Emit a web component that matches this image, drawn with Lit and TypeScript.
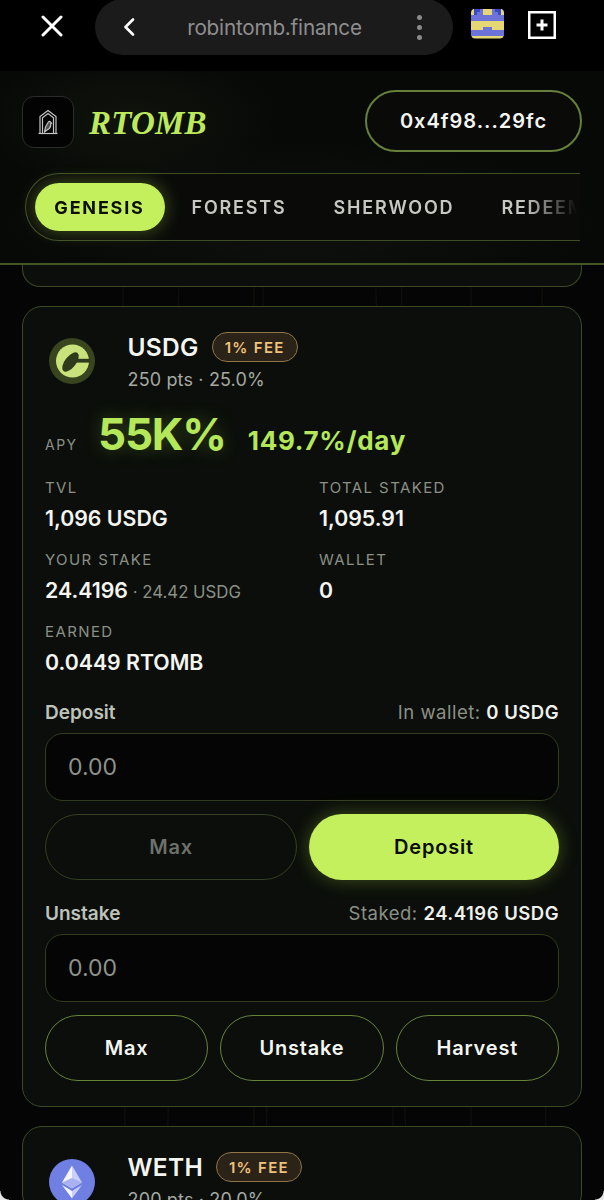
import { LitElement, html, css, svg } from "lit"
import { customElement } from "lit/decorators.js"

interface Stat {
  label: string
  value: string
  note?: string
}

const STATS: Stat[] = [
  { label: "TVL", value: "1,096 USDG" },
  { label: "TOTAL STAKED", value: "1,095.91" },
  { label: "YOUR STAKE", value: "24.4196", note: "24.42 USDG" },
  { label: "WALLET", value: "0" },
  { label: "EARNED", value: "0.0449 RTOMB" },
]

// pixel-art favicon of the open tab, 11x10 cells (d dark blue, b blue, y yellow)
const FAVICON = [
  "yddbyyybddy",
  "ydbbyyybbdy",
  "bbbbbbbbbbb",
  "bbbbbbbbbbb",
  "yyyyyyyyyyy",
  "yyyyyyyyyyy",
  "yyyybbbyyyy",
  "bbbbbbbbbbb",
  "bbbbbbbbbbb",
  "yyyyyyyyyyy",
]

const CELL: Record<string, string> = { d: "#3a49c8", b: "#6d72d8" }

function favicon() {
  return html`<svg class="favicon" width="33" height="31" viewBox="0 0 11 10" shape-rendering="crispEdges">
    <defs><clipPath id="fav"><rect width="11" height="10" rx="1.400" /></clipPath></defs>
    <g clip-path="url(#fav)">
      <rect width="11" height="10" fill="#e6d776" />
      ${FAVICON.flatMap((row, y) =>
        [...row].map((c, x) =>
          CELL[c] ? svg`<rect x=${x} y=${y} width="1.02" height="1.02" fill=${CELL[c]} />` : null,
        ),
      )}
    </g>
  </svg>`
}

const birdLogo = html`<svg width="22" height="26" viewBox="0 0 22 26" fill="none" stroke="#c4c4c4" stroke-width="1.2">
  <path d="M3 24V7.500L11 1.500l8 6V24" />
  <path d="M5.500 24V8.800L11 4.500l5.500 4.300V24" />
  <path d="M1.500 24.500h19" />
  <path d="M7.500 23c.3-3.500 1.500-7 3.500-9.500.5-1.500 2.300-1.500 2.800 0l.8.8-.8.4c.2 3-1.300 5-3.400 6z" fill="#555" />
</svg>`

const usdgLogo = html`<svg class="coin" width="46" height="46" viewBox="0 0 46 46">
  <circle cx="23" cy="23" r="23" fill="#38451f" />
  <circle cx="23.500" cy="23" r="16.500" fill="#c9e27c" />
  <ellipse cx="21.500" cy="24" rx="11.500" ry="5.500" transform="rotate(-52 21.500 24)" fill="#2f3b1a" />
  <rect x="22" y="20.800" width="19" height="3.800" fill="#2f3b1a" />
</svg>`

const ethLogo = html`<svg class="coin eth" width="46" height="46" viewBox="0 0 46 46">
  <circle cx="23" cy="23" r="23" fill="#6f80e2" />
  <path d="M23 6.500 13 23.500l10 5.800z" fill="#f4f5fd" />
  <path d="M23 6.500 33 23.500l-10 5.800z" fill="#c9cff5" />
  <path d="M13 23.500l10-4.500 10 4.500-10 5.800z" fill="#a9b2ee" />
  <path d="M13 26l10 13.500V32z" fill="#f4f5fd" />
  <path d="M33 26 23 39.500V32z" fill="#c9cff5" />
</svg>`

@customElement("app-root")
export class AppRoot extends LitElement {
  static styles = css`
    :host {
      display: block;
      width: 604px;
      height: 1200px;
      overflow: hidden;
      background: #040504;
      color: #f4f5f0;
      font-family: Inter, "Liberation Sans", sans-serif;
      position: relative;
    }
    .browser {
      height: 71px;
      background: #000;
      display: flex;
      align-items: flex-start;
    }
    .close {
      margin: 15px 0 0 41px;
    }
    .urlbar {
      margin: -1px 0 0 32px;
      width: 358px;
      height: 56px;
      border-radius: 28px;
      background: #1b1b1b;
      display: flex;
      align-items: center;
      box-sizing: border-box;
      padding: 0 31px 0 28px;
    }
    .url {
      flex: 1;
      text-align: center;
      font-size: 20.7px;
      color: #8e8e8e;
      letter-spacing: -0.2px;
      padding-right: 3px;
    }
    .dots {
      display: flex;
      flex-direction: column;
      gap: 5px;
    }
    .dots i {
      width: 5px;
      height: 5px;
      border-radius: 50%;
      background: #8a8a8a;
    }
    .favicon {
      margin: 8px 0 0 18px;
    }
    .newtab {
      margin: 11px 0 0 24px;
    }

    header {
      height: 194px;
      box-sizing: border-box;
      border-bottom: 2px solid #445626;
      background:
        radial-gradient(ellipse 150px 70px at 130px 50px, #10140c, transparent),
        radial-gradient(ellipse 300px 80px at 300px 150px, #111210, transparent),
        #070907;
    }
    .top {
      display: flex;
      align-items: center;
      justify-content: space-between;
      padding: 19px 22px 0;
    }
    .brand {
      display: flex;
      align-items: center;
      gap: 15px;
    }
    .logo {
      width: 52px;
      height: 52px;
      box-sizing: border-box;
      border: 1.5px solid #2b2d2b;
      border-radius: 12px;
      background: #030303;
      display: flex;
      align-items: center;
      justify-content: center;
      margin-top: 2px;
    }
    .name {
      font-family: "Liberation Serif", serif;
      font-style: italic;
      font-weight: 700;
      font-size: 33px;
      letter-spacing: 0.2px;
      color: #bdea5c;
      margin-top: 4px;
    }
    .wallet {
      width: 217px;
      height: 62px;
      box-sizing: border-box;
      border: 2px solid #667f3b;
      border-radius: 31px;
      display: flex;
      align-items: center;
      justify-content: center;
      font-size: 20px;
      font-weight: 600;
      letter-spacing: 1px;
      color: #f4f5f0;
      background: #0a0b09;
    }
    nav {
      margin: 21px 24px 0 25px;
      height: 68px;
      box-sizing: border-box;
      border: 1.5px solid #3f4f25;
      border-right: none;
      border-radius: 34px 0 0 34px;
      overflow: hidden;
      display: flex;
      align-items: center;
      padding-left: 8.5px;
      background: #0a0b09;
    }
    .tabs {
      flex: 1;
      display: flex;
      align-items: center;
      gap: 47px;
      white-space: nowrap;
      overflow: hidden;
      height: 100%;
      font-size: 18px;
      font-weight: 600;
      letter-spacing: 1.8px;
      color: #c6c8c1;
      -webkit-mask-image: linear-gradient(to right, #000 90%, transparent 99.5%);
      mask-image: linear-gradient(to right, #000 90%, transparent 99.5%);
      padding: 0 0 0 2px;
      margin-left: -2px;
    }
    .tabs span.active {
      width: 130px;
      height: 48px;
      border-radius: 24px;
      background: #c4f05d;
      color: #0b0f06;
      font-weight: 700;
      display: flex;
      align-items: center;
      justify-content: center;
      margin-right: -20px;
      flex: none;
    }
    .glow {
      position: absolute;
      left: 35px;
      top: 183px;
      width: 130px;
      height: 48px;
      border-radius: 24px;
      box-shadow: 0 0 16px 2px rgba(170, 215, 70, 0.3);
      pointer-events: none;
    }

    main {
      position: relative;
      padding: 0 22px;
      display: flex;
      flex-direction: column;
      gap: 19px;
    }
    .rays {
      position: absolute;
      left: 0;
      top: 0;
      width: 604px;
      height: 935px;
    }
    .stub,
    .card {
      position: relative;
      box-sizing: border-box;
      border: 1.5px solid #3b4a24;
      background: #0b0e0a;
    }
    .stub {
      height: 22px;
      border-top: none;
      border-radius: 0 0 18px 18px;
    }
    .card {
      border-radius: 20px;
      padding: 0 22px;
    }
    .pool {
      height: 801px;
    }
    .head {
      display: flex;
      align-items: flex-start;
      padding-top: 25px;
    }
    .coin {
      margin: 6px 0 0 4px;
      flex: none;
    }
    .coin.eth {
      margin-top: 7px;
    }
    .titles {
      margin-left: 32.5px;
    }
    .titleline {
      display: flex;
      align-items: center;
      gap: 13px;
      height: 30px;
    }
    .title {
      font-size: 24.5px;
      font-weight: 600;
      letter-spacing: 0.3px;
    }
    .badge {
      width: 86px;
      height: 30px;
      box-sizing: border-box;
      border: 1.5px solid #8f7548;
      border-radius: 15px;
      background: #2b2318;
      color: #f0c27c;
      font-size: 15px;
      font-weight: 600;
      letter-spacing: 1.3px;
      display: flex;
      align-items: center;
      justify-content: center;
    }
    .sub {
      margin-top: 5px;
      font-size: 18px;
      color: #a5a9a1;
      line-height: 26px;
      letter-spacing: 0.15px;
    }
    .apy {
      display: flex;
      align-items: baseline;
      margin-top: 14px;
      height: 58px;
    }
    .apy .tag {
      width: 53px;
      font-size: 14px;
      letter-spacing: 1.5px;
      color: #8c9087;
    }
    .apy .big {
      font-size: 44px;
      font-weight: 700;
      letter-spacing: -1.2px;
      color: #b4e75a;
      text-shadow: 0 0 18px rgba(170, 225, 80, 0.3);
    }
    .apy .day {
      margin-left: 22px;
      font-size: 26px;
      font-weight: 700;
      color: #b4e75a;
      letter-spacing: 0.7px;
    }
    .stats {
      display: grid;
      grid-template-columns: 274px 1fr;
      row-gap: 18px;
      margin-top: 13px;
    }
    .stat .label {
      font-size: 15px;
      letter-spacing: 1.4px;
      color: #8c9087;
      line-height: 20px;
    }
    .stat .value {
      margin-top: 7px;
      height: 27px;
      font-size: 21.3px;
      font-weight: 600;
      line-height: 27px;
    }
    .stat .note {
      font-size: 16.8px;
      font-weight: 400;
      color: #8c9087;
    }
    .fieldhead {
      display: flex;
      justify-content: space-between;
      align-items: center;
      height: 24px;
    }
    .fieldhead b {
      font-size: 19px;
      font-weight: 600;
      color: #bfc2ba;
    }
    .fieldhead span {
      font-size: 18.5px;
      color: #8c9087;
      letter-spacing: 0.5px;
    }
    .fieldhead span b {
      font-size: 18.5px;
      font-weight: 600;
      color: #f0f1ec;
    }
    .input {
      margin-top: 9px;
      height: 68px;
      box-sizing: border-box;
      border: 1.5px solid #323d20;
      border-radius: 18px;
      background: #040504;
      display: flex;
      align-items: center;
      padding-left: 22px;
      font-size: 23px;
      color: #8f928b;
    }
    .buttons {
      display: flex;
      gap: 12px;
      margin-top: 13px;
    }
    .btn {
      flex: 1;
      height: 66px;
      box-sizing: border-box;
      border: 1.5px solid #67843a;
      border-radius: 33px;
      display: flex;
      align-items: center;
      justify-content: center;
      font-size: 20px;
      font-weight: 600;
      letter-spacing: 0.8px;
      color: #f4f5f0;
    }
    .btn.off {
      border-color: #333f20;
      color: #6e706b;
    }
    .btn.primary {
      border: none;
      background: #c4f05d;
      color: #0a0d05;
      box-shadow: 0 0 18px 1px rgba(170, 215, 70, 0.3);
    }
    .deposit {
      margin-top: 24px;
    }
    .unstake {
      margin-top: 21px;
    }
    .corner {
      position: absolute;
      bottom: 0;
      width: 9px;
      height: 9px;
    }
    .corner.left {
      left: 0;
      background: radial-gradient(circle at top right, transparent 8px, #e8e8e8 9px);
    }
    .corner.right {
      right: 0;
      background: radial-gradient(circle at top left, transparent 8px, #e8e8e8 9px);
    }
  `

  private stat(s: Stat) {
    return html`<div class="stat">
      <div class="label">${s.label}</div>
      <div class="value">${s.value}${s.note ? html`<span class="note"> · ${s.note}</span>` : ""}</div>
    </div>`
  }

  render() {
    return html`
      <div class="browser">
        <svg class="close" width="22" height="22" viewBox="0 0 22 22" stroke="#fff" stroke-width="3" stroke-linecap="round">
          <path d="M2 2l18 18M20 2 2 20" />
        </svg>
        <div class="urlbar">
          <svg width="12" height="18" viewBox="0 0 12 18" fill="none" stroke="#fff" stroke-width="2.6" stroke-linecap="round" stroke-linejoin="round">
            <path d="M10 1.500 2.500 9l7.500 7.500" />
          </svg>
          <span class="url">robintomb.finance</span>
          <div class="dots"><i></i><i></i><i></i></div>
        </div>
        ${favicon()}
        <svg class="newtab" width="28" height="28" viewBox="0 0 28 28" fill="none" stroke="#fff">
          <rect x="1.250" y="1.250" width="25.500" height="25.500" stroke-width="2.5" />
          <path d="M14 8.500v11M8.500 14h11" stroke-width="3" />
        </svg>
      </div>
      <header>
        <div class="top">
          <div class="brand">
            <div class="logo">${birdLogo}</div>
            <div class="name">RTOMB</div>
          </div>
          <div class="wallet">0x4f98...29fc</div>
        </div>
        <nav>
          <div class="tabs">
            <span class="active">GENESIS</span>
            <span>FORESTS</span>
            <span>SHERWOOD</span>
            <span>REDEEM</span>
          </div>
        </nav>
      </header>
      <div class="glow"></div>
      <main>
        <svg class="rays" viewBox="0 0 604 935" fill="none" stroke="#0d0f0a" stroke-width="1.5">
          <path d="M123 0l2 935M179 0l-12 935M263 0l4 935M375 0l33 935M402 0l-10 935M542 0l4 935M471 0v935M254 0v935" />
        </svg>
        <div class="stub"></div>
        <section class="card pool">
          <div class="head">
            ${usdgLogo}
            <div class="titles">
              <div class="titleline"><span class="title">USDG</span><span class="badge">1% FEE</span></div>
              <div class="sub">250 pts · 25.0%</div>
            </div>
          </div>
          <div class="apy">
            <span class="tag">APY</span>
            <span class="big">55K%</span>
            <span class="day">149.7%/day</span>
          </div>
          <div class="stats">${STATS.map((s) => this.stat(s))}</div>
          <div class="fieldhead deposit"><b>Deposit</b><span>In wallet: <b>0 USDG</b></span></div>
          <div class="input">0.00</div>
          <div class="buttons">
            <div class="btn off">Max</div>
            <div class="btn primary">Deposit</div>
          </div>
          <div class="fieldhead unstake"><b>Unstake</b><span>Staked: <b>24.4196 USDG</b></span></div>
          <div class="input">0.00</div>
          <div class="buttons">
            <div class="btn">Max</div>
            <div class="btn">Unstake</div>
            <div class="btn">Harvest</div>
          </div>
        </section>
        <section class="card">
          <div class="head">
            ${ethLogo}
            <div class="titles">
              <div class="titleline"><span class="title">WETH</span><span class="badge">1% FEE</span></div>
              <div class="sub">200 pts · 20.0%</div>
            </div>
          </div>
        </section>
      </main>
      <div class="corner left"></div>
      <div class="corner right"></div>
    `
  }
}
